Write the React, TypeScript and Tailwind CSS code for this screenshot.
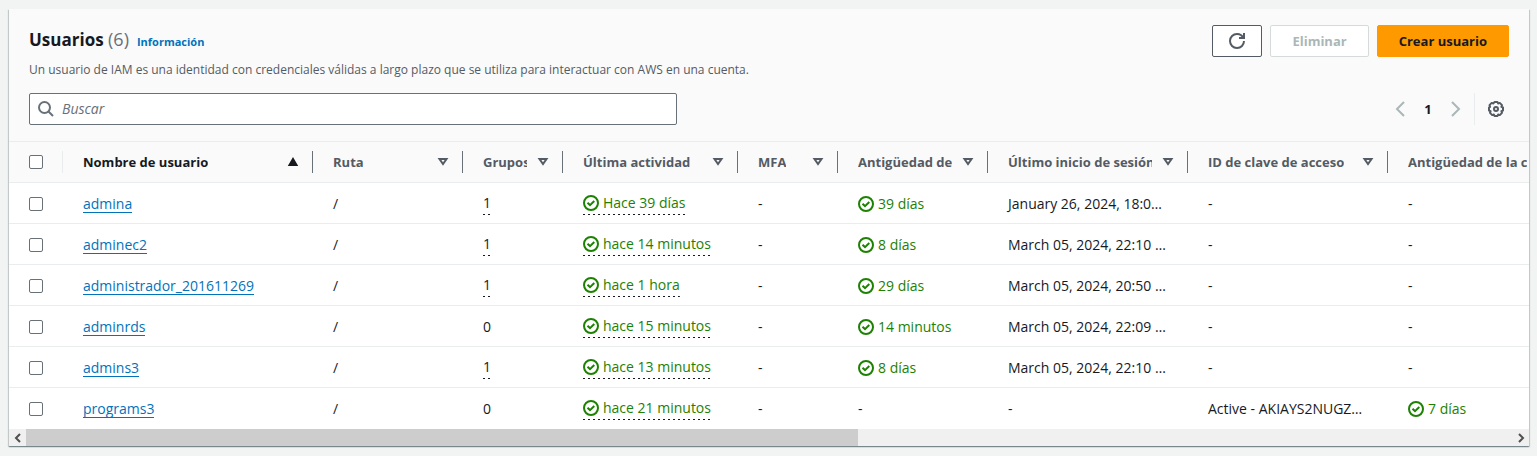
import { useRef, type ReactNode } from 'react';

type Column = { label: string; width: string; sorted?: boolean };

const columns: Column[] = [
  { label: 'Nombre de usuario', width: 'w-[250px]', sorted: true },
  { label: 'Ruta', width: 'w-[150px]' },
  { label: 'Grupos', width: 'w-[100px]' },
  { label: 'Última actividad', width: 'w-[175px]' },
  { label: 'MFA', width: 'w-[100px]' },
  { label: 'Antigüedad de la contraseña', width: 'w-[150px]' },
  { label: 'Último inicio de sesión en la consola', width: 'w-[200px]' },
  { label: 'ID de clave de acceso', width: 'w-[200px]' },
  { label: 'Antigüedad de la clave activa', width: 'w-[175px]' },
];

type User = {
  name: string;
  groups: number;
  activity: string;
  password?: string;
  login: string;
  keyId: string;
  keyAge?: string;
};

const users: User[] = [
  { name: 'admina', groups: 1, activity: 'Hace 39 días', password: '39 días', login: 'January 26, 2024, 18:04 (UTC-06:00)', keyId: '-' },
  { name: 'adminec2', groups: 1, activity: 'hace 14 minutos', password: '8 días', login: 'March 05, 2024, 22:10 (UTC-06:00)', keyId: '-' },
  { name: 'administrador_201611269', groups: 1, activity: 'hace 1 hora', password: '29 días', login: 'March 05, 2024, 20:50 (UTC-06:00)', keyId: '-' },
  { name: 'adminrds', groups: 0, activity: 'hace 15 minutos', password: '14 minutos', login: 'March 05, 2024, 22:09 (UTC-06:00)', keyId: '-' },
  { name: 'admins3', groups: 1, activity: 'hace 13 minutos', password: '8 días', login: 'March 05, 2024, 22:10 (UTC-06:00)', keyId: '-' },
  { name: 'programs3', groups: 0, activity: 'hace 21 minutos', login: '-', keyId: 'Active - AKIAYS2NUGZXXXXXX', keyAge: '7 días' },
];

function CheckIcon() {
  return (
    <svg viewBox="0 0 16 16" className="size-4 shrink-0" fill="none" stroke="currentColor" strokeWidth="2" aria-hidden="true">
      <circle cx="8" cy="8" r="7" />
      <path d="M4.500 7.800l2.500 2.300 4.300-4.100" />
    </svg>
  );
}

function SortIcon({ sorted }: { sorted?: boolean }) {
  return (
    <svg viewBox="0 0 16 16" className="size-4 shrink-0" fill="none" stroke="currentColor" strokeWidth="2" aria-hidden="true">
      {sorted ? <path d="M8 5l3.5 6h-7z" fill="currentColor" /> : <path d="M4.500 5h7L8 10z" />}
    </svg>
  );
}

function Chevron({ right }: { right?: boolean }) {
  return (
    <svg viewBox="0 0 16 16" className="size-4" fill="none" stroke="currentColor" strokeWidth="2" aria-hidden="true">
      {right ? <path d="M4 1l7 7-7 7" /> : <path d="M12 1L5 8l7 7" />}
    </svg>
  );
}

function Status({ children }: { children: ReactNode }) {
  return (
    <span className="flex h-5 w-fit items-center gap-1 text-[#1d8102]">
      <CheckIcon />
      {children}
    </span>
  );
}

function Hint({ children }: { children: ReactNode }) {
  return (
    <span className="flex h-[22px] w-fit bg-[repeating-linear-gradient(to_right,#16191f_0_2px,transparent_2px_5px)] bg-[length:100%_1px] bg-bottom bg-no-repeat">
      {children}
    </span>
  );
}

function Checkbox({ label }: { label: string }) {
  return (
    <input
      type="checkbox"
      aria-label={label}
      className="block size-3.5 appearance-none rounded-xs border border-[#687078] bg-white checked:bg-[#0073bb]"
    />
  );
}

function Cell({ children }: { children: ReactNode }) {
  return <td className="truncate px-5 pt-0.5 pb-0">{children}</td>;
}

export default function App() {
  const scroller = useRef<HTMLDivElement>(null);
  const scroll = (left: number) => scroller.current?.scrollBy({ left });

  return (
    <div className="min-h-screen bg-[#f2f3f3] pt-[9px] pr-2 pb-2 pl-[9px] font-['Open_Sans','Noto_Sans',sans-serif] text-sm text-[#16191f]">
      <main className="bg-white shadow-[0_1px_1px_0_rgba(0,28,36,0.3),1px_1px_1px_0_rgba(0,28,36,0.15),-1px_1px_1px_0_rgba(0,28,36,0.15)]">
        <header className="border-b border-[#eaeded] bg-[#fafafa] px-5 pt-4 pb-4">
          <div className="flex h-8 items-start justify-between">
            <div className="flex items-baseline gap-2 pt-0.5">
              <h1 className="text-[17px] leading-6 font-bold">
                Usuarios <span className="text-lg leading-6 font-normal text-[#687078]">(6)</span>
              </h1>
              <a href="#informacion" className="text-[11px] leading-4 font-bold text-[#0073bb]">Información</a>
            </div>
            <div className="flex gap-2 text-[13px]">
              <button type="button" aria-label="Actualizar" className="flex h-8 w-[50px] items-center justify-center rounded-xs border border-[#545b64] bg-white text-[#545b64]">
                <svg viewBox="0 0 16 16" className="size-4" fill="none" stroke="currentColor" strokeWidth="2" aria-hidden="true">
                  <path d="M10 5h5V0" />
                  <path d="M15 8a6.957 6.957 0 0 1-7 7 6.957 6.957 0 0 1-7-7 6.957 6.957 0 0 1 7-7 6.87 6.87 0 0 1 6.3 4" />
                </svg>
              </button>
              <button type="button" disabled className="h-8 rounded-xs border border-[#d5dbdb] bg-white px-[21px] font-bold text-[#aab7b8]">Eliminar</button>
              <button type="button" className="h-8 rounded-xs border border-[#ff9900] bg-[#ff9900] px-[21px] font-bold">Crear usuario</button>
            </div>
          </div>
          <p className="mt-1 text-xs leading-[18px] text-[#545b64]">
            Un usuario de IAM es una identidad con credenciales válidas a largo plazo que se utiliza para interactuar con AWS en una cuenta.
          </p>
          <div className="mt-3.5 flex items-center justify-between">
            <label className="flex h-8 w-[648px] items-center gap-2 rounded-xs border border-[#687078] bg-white px-2 text-[#687078]">
              <svg viewBox="0 0 16 16" className="size-4 shrink-0" fill="none" stroke="currentColor" strokeWidth="2" aria-hidden="true">
                <circle cx="6.5" cy="6.5" r="5.5" />
                <path d="M10.5 10.5L15 15" />
              </svg>
              <input type="search" aria-label="Buscar" placeholder="Buscar" className="min-w-0 flex-1 bg-transparent outline-none placeholder:text-[#687078] placeholder:italic" />
            </label>
            <div className="flex h-8 items-center">
              <button type="button" disabled aria-label="Página anterior" className="text-[#aab7b8]"><Chevron /></button>
              <button type="button" className="w-10 text-[13px] font-bold">1</button>
              <button type="button" disabled aria-label="Página siguiente" className="text-[#aab7b8]"><Chevron right /></button>
              <button type="button" aria-label="Preferencias" className="ml-2.5 flex h-8 items-center border-l border-[#eaeded] pr-[5px] pl-[13px] text-[#545b64]">
                <svg viewBox="0 0 16 16" className="size-4" fill="none" stroke="currentColor" strokeWidth="2" strokeLinejoin="round" aria-hidden="true">
                  <path d="M6.500 1h3l.6 1.500 1.700-.6 2.200 2.200-.6 1.700 1.600.7v3l-1.600.7.6 1.700-2.200 2.200-1.700-.6-.6 1.500h-3l-.6-1.500-1.700.6-2.200-2.200.6-1.700L1 9.500v-3l1.100-.7-.6-1.700 2.200-2.200 1.700.6z" />
                  <circle cx="8" cy="8" r="2" />
                </svg>
              </button>
            </div>
          </div>
        </header>

        <div ref={scroller} className="overflow-hidden">
          <table className="w-[1554px] table-fixed border-separate border-spacing-0 text-left">
            <thead className="bg-[#fafafa] text-[13px] text-[#545b64]">
              <tr className="h-[41px] [&>th]:border-b [&>th]:border-[#eaeded]">
                <th className="w-[54px] p-0">
                  <div className="flex h-[22px] items-center border-r border-[#eaeded] pl-5"><Checkbox label="Seleccionar todos los usuarios" /></div>
                </th>
                {columns.map((c) => (
                  <th key={c.label} className={`p-0 font-bold ${c.width} ${c.sorted ? 'text-[#16191f]' : ''}`}>
                    <div className="flex h-[22px] items-center justify-between gap-2 border-r border-[#687078] pr-[11px] pl-5">
                      <span className="overflow-hidden whitespace-nowrap">{c.label}</span>
                      <SortIcon sorted={c.sorted} />
                    </div>
                  </th>
                ))}
              </tr>
            </thead>
            <tbody>
              {users.map((u) => (
                <tr key={u.name} className="h-[41px] [&>td]:border-b [&>td]:border-[#eaeded] last:[&>td]:border-white">
                  <td className="pt-0.5 pb-0 pl-5"><Checkbox label={`Seleccionar ${u.name}`} /></td>
                  <Cell>
                    <a href={`#${u.name}`} className="inline-block border-b border-[#0073bb] leading-4 text-[#0073bb]">{u.name}</a>
                  </Cell>
                  <Cell>/</Cell>
                  <Cell>{u.groups > 0 ? <Hint>{u.groups}</Hint> : u.groups}</Cell>
                  <Cell><Hint><Status>{u.activity}</Status></Hint></Cell>
                  <Cell>-</Cell>
                  <Cell>{u.password ? <Status>{u.password}</Status> : '-'}</Cell>
                  <Cell>{u.login}</Cell>
                  <Cell>{u.keyId}</Cell>
                  <Cell>{u.keyAge ? <Status>{u.keyAge}</Status> : '-'}</Cell>
                </tr>
              ))}
            </tbody>
          </table>
        </div>

        <div className="flex h-[17px] bg-[#f0f0f0] text-[#505050]">
          <button type="button" aria-label="Desplazar a la izquierda" onClick={() => scroll(-100)} className="flex w-[17px] items-center justify-center">
            <svg viewBox="0 0 8 10" className="h-2.5 w-2" fill="none" stroke="currentColor" strokeWidth="2" aria-hidden="true"><path d="M6 1L2 5l4 4" /></svg>
          </button>
          <div className="flex-1"><div className="h-full w-[56%] bg-[#cdcdcd]" /></div>
          <button type="button" aria-label="Desplazar a la derecha" onClick={() => scroll(100)} className="flex w-[17px] items-center justify-center">
            <svg viewBox="0 0 8 10" className="h-2.5 w-2" fill="none" stroke="currentColor" strokeWidth="2" aria-hidden="true"><path d="M2 1l4 4-4 4" /></svg>
          </button>
        </div>
      </main>
    </div>
  );
}
